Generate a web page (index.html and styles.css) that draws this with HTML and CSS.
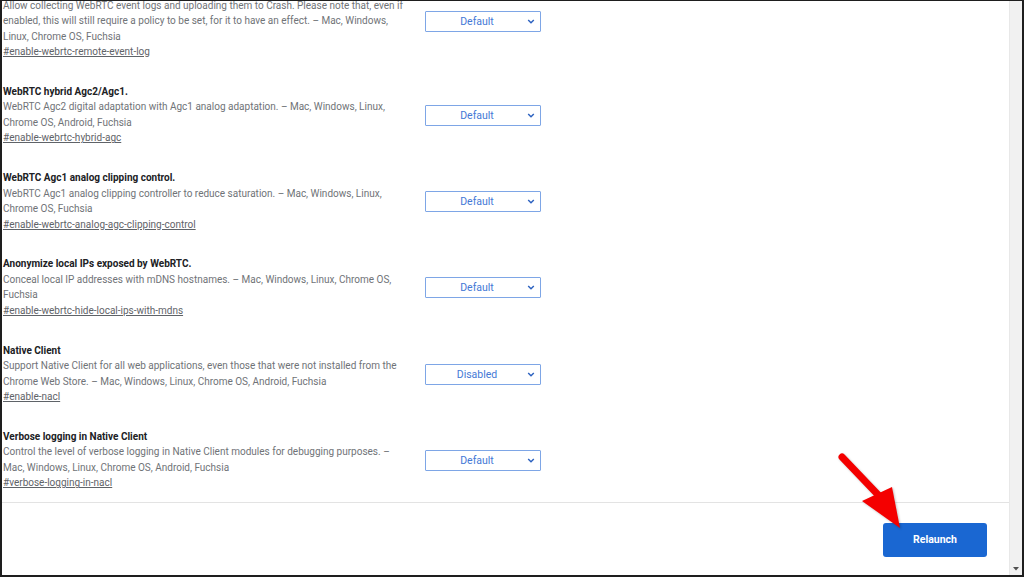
FILE: index.html
```html
<!DOCTYPE html>
<html lang="en">
<head>
    <meta charset="UTF-8">
    <title>Experiments</title>
    <link rel="stylesheet" href="styles.css">
</head>
<body>
    <div class="frame">
        <div class="main">
            <div class="flags">
                <!-- first entry is scrolled partly out of view -->
                <div class="flag first">
                    <div class="flag-text">
                        <p>Allow collecting WebRTC event logs and uploading them to Crash. Please note that, even if enabled, this will still require a policy to be set, for it to have an effect. – Mac, Windows, Linux, Chrome OS, Fuchsia</p>
                        <a href="#">#enable-webrtc-remote-event-log</a>
                    </div>
                    <div class="dropdown">Default <svg viewBox="0 0 10 6"><polyline points="1.5,1 5,4.5 8.5,1"/></svg></div>
                </div>

                <div class="flag">
                    <div class="flag-text">
                        <h3>WebRTC hybrid Agc2/Agc1.</h3>
                        <p>WebRTC Agc2 digital adaptation with Agc1 analog adaptation. – Mac, Windows, Linux, Chrome OS, Android, Fuchsia</p>
                        <a href="#">#enable-webrtc-hybrid-agc</a>
                    </div>
                    <div class="dropdown">Default <svg viewBox="0 0 10 6"><polyline points="1.5,1 5,4.5 8.5,1"/></svg></div>
                </div>

                <div class="flag">
                    <div class="flag-text">
                        <h3>WebRTC Agc1 analog clipping control.</h3>
                        <p>WebRTC Agc1 analog clipping controller to reduce saturation. – Mac, Windows, Linux, Chrome OS, Fuchsia</p>
                        <a href="#">#enable-webrtc-analog-agc-clipping-control</a>
                    </div>
                    <div class="dropdown">Default <svg viewBox="0 0 10 6"><polyline points="1.5,1 5,4.5 8.5,1"/></svg></div>
                </div>

                <div class="flag">
                    <div class="flag-text">
                        <h3>Anonymize local IPs exposed by WebRTC.</h3>
                        <p>Conceal local IP addresses with mDNS hostnames. – Mac, Windows, Linux, Chrome OS, Fuchsia</p>
                        <a href="#">#enable-webrtc-hide-local-ips-with-mdns</a>
                    </div>
                    <div class="dropdown">Default <svg viewBox="0 0 10 6"><polyline points="1.5,1 5,4.5 8.5,1"/></svg></div>
                </div>

                <div class="flag">
                    <div class="flag-text">
                        <h3>Native Client</h3>
                        <p>Support Native Client for all web applications, even those that were not installed from the Chrome Web Store. – Mac, Windows, Linux, Chrome OS, Android, Fuchsia</p>
                        <a href="#">#enable-nacl</a>
                    </div>
                    <div class="dropdown">Disabled <svg viewBox="0 0 10 6"><polyline points="1.5,1 5,4.5 8.5,1"/></svg></div>
                </div>

                <div class="flag">
                    <div class="flag-text">
                        <h3>Verbose logging in Native Client</h3>
                        <p>Control the level of verbose logging in Native Client modules for debugging purposes. – Mac, Windows, Linux, Chrome OS, Android, Fuchsia</p>
                        <a href="#">#verbose-logging-in-nacl</a>
                    </div>
                    <div class="dropdown">Default <svg viewBox="0 0 10 6"><polyline points="1.5,1 5,4.5 8.5,1"/></svg></div>
                </div>
            </div>

            <footer>
                <button class="btn-relaunch">Relaunch</button>
            </footer>
        </div>

        <div class="scrollbar">
            <svg class="scroll-arrow" viewBox="0 0 6 4"><polygon points="0,0 6,0 3,3.5"/></svg>
        </div>

        <!-- red annotation arrow -->
        <svg class="annotation" width="90" height="90" viewBox="0 0 90 90">
            <line x1="8" y1="8" x2="50" y2="52" stroke="#f40000" stroke-width="7" stroke-linecap="round"/>
            <polygon points="28,52 58,38 66,79" fill="#f40000"/>
        </svg>
    </div>
</body>
</html>
```

FILE: styles.css
```css
* {
    margin: 0;
    padding: 0;
    box-sizing: border-box;
}

body {
    font-family: Roboto, 'Liberation Sans', sans-serif;
    background: #fff;
    width: 1024px;
    height: 577px;
    overflow: hidden;
}

.frame {
    position: relative;
    display: flex;
    width: 1024px;
    height: 577px;
    border: 2px solid #1e1e1e;
    border-top-width: 1px;
    overflow: hidden;
}

.main {
    flex: 1;
    display: flex;
    flex-direction: column;
    min-width: 0;
}

.flags {
    flex: 1;
    overflow: hidden;
    padding-left: 1px;
}

.flag {
    display: flex;
    align-items: center;
    margin-bottom: 23.25px;
}

/* title row sits above the visible area */
.flag.first {
    margin-top: -19px;
}

.flag.first .flag-text {
    padding-top: 15.5px;
}

.flag-text {
    width: 408px;
    font-size: 10px;
    line-height: 15.5px;
}

.flag-text h3 {
    font-size: 10px;
    font-weight: bold;
    color: #202124;
}

.flag-text p {
    color: #707377;
}

.flag-text a {
    display: inline-block;
    color: #5f6368;
    line-height: 16.5px;
    text-decoration: underline;
}

.dropdown {
    position: relative;
    margin-left: 14px;
    width: 116px;
    height: 21px;
    border: 1px solid #7ea6e6;
    border-radius: 1px;
    color: #4479d6;
    font-size: 10.5px;
    line-height: 19px;
    text-align: center;
    padding-right: 12px;
}

.dropdown svg {
    position: absolute;
    right: 5px;
    top: 7px;
    width: 8px;
    height: 5px;
    fill: none;
    stroke: #2d62c0;
    stroke-width: 1.8;
}

footer {
    height: 73px;
    border-top: 1px solid #e3e3e3;
    display: flex;
    align-items: center;
    justify-content: flex-end;
    padding-right: 22px;
    padding-top: 1px;
}

.btn-relaunch {
    width: 104px;
    height: 34px;
    background: #1a67d2;
    color: #fff;
    border: none;
    border-radius: 3px;
    font-family: Roboto, 'Liberation Sans', sans-serif;
    font-size: 10.5px;
    font-weight: bold;
}

.scrollbar {
    width: 13px;
    background: #f1f1f1;
    border-left: 1px solid #e8e8e8;
    display: flex;
    flex-direction: column;
    justify-content: flex-end;
    align-items: center;
    padding-bottom: 4px;
}

.scroll-arrow {
    width: 6px;
    height: 4px;
    fill: #505050;
}

.annotation {
    position: absolute;
    left: 832px;
    top: 448px;
    filter: drop-shadow(1px 1px 1px rgba(0, 0, 0, 0.25));
}
```
